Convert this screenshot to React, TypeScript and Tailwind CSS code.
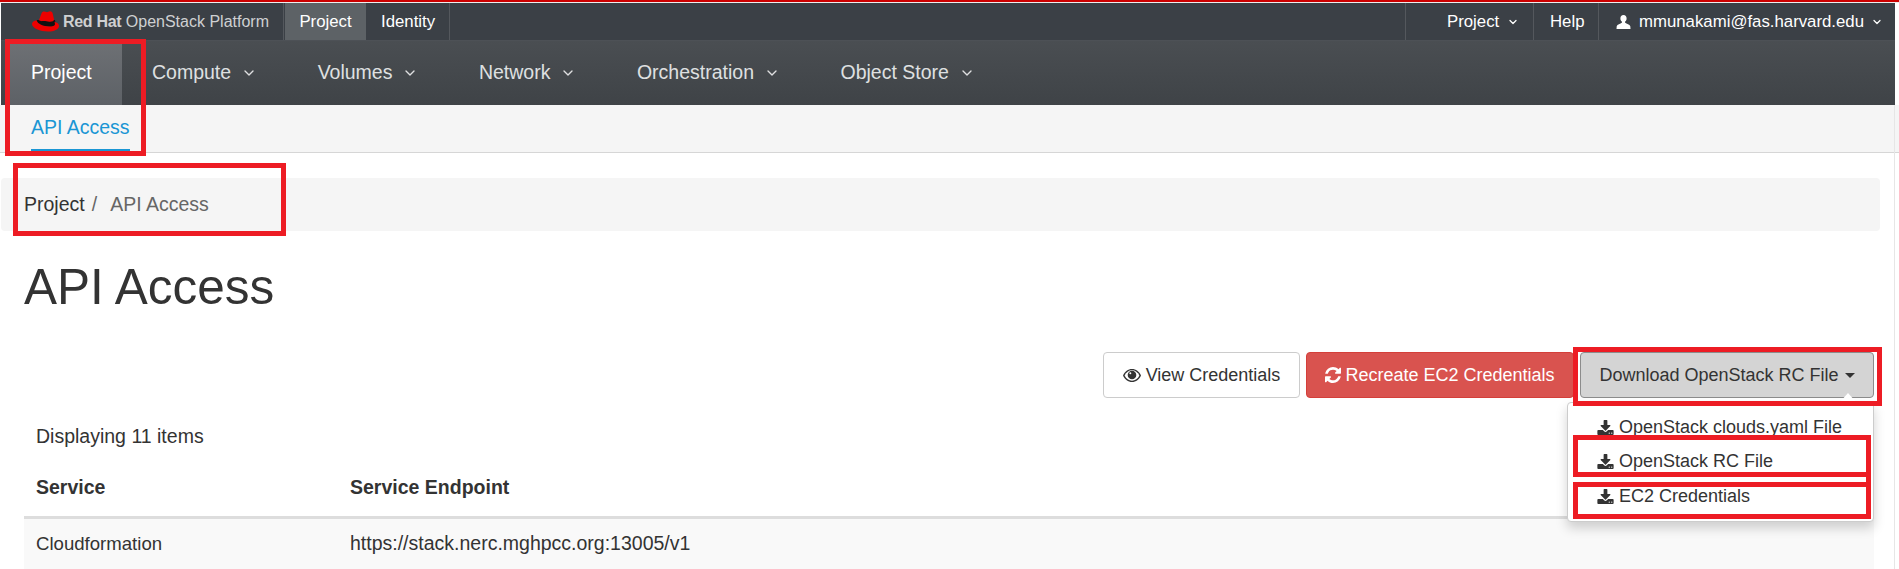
import { ChevronDown } from "lucide-react";
import type { ReactNode } from "react";

function User() {
  return (
    <svg viewBox="0 0 14 14" className="w-[15px] h-[14px] fill-white shrink-0">
      <path d="M7 0C5 0 3.9 1.5 3.9 3.400c0 1.300.5 2.500 1.400 3.200.3.3.3.9 0 1.200C4 8.900.7 9.500.2 11.200L0 14h14l-.2-2.800c-.5-1.700-3.800-2.300-5.100-3.400-.3-.3-.3-.9 0-1.200.9-.7 1.400-1.900 1.400-3.200C10.100 1.500 9 0 7 0z" />
    </svg>
  );
}

function RedHat() {
  return (
    <svg viewBox="0 0 27 21" className="w-[27px] h-[21px] shrink-0">
      <path fill="#111" d="M4 9 L23 9 L24 16 L8 15z" />
      <path fill="#e00" d="M7 9 L9.500 2.500 C10 1 11 .5 12 .5 C13 .5 14 1.200 15 1.200 C16 1.200 16.500 .3 18 .3 C19.500 .3 20.500 1.200 20.800 3 L22 8.500 C22 10.500 19 11 16 10.500 C12 10 7.500 10.500 7 9z" />
      <path fill="#e00" d="M4.800 9.200 C2 9.800 0 11 0 13 C0 17 8 20.500 16 20.500 C22 20.500 27 18.500 27 15 C27 13 25 11.500 22.500 10.800 L23 13 C23 15 20 15.500 17 15.500 C12 15.500 5 12.500 5 10z" />
    </svg>
  );
}

function Eye() {
  return (
    <svg viewBox="0 0 18 13" className="w-[18px] h-[13px] shrink-0">
      <path fill="#333" d="M9 0C5 0 1.800 2.500 0 6.500 1.800 10.500 5 13 9 13s7.200-2.500 9-6.500C16.200 2.500 13 0 9 0z" />
      <path fill="#fff" d="M9 1.300C5.800 1.300 3.200 3.300 1.600 6.500 3.200 9.700 5.800 11.700 9 11.700s5.800-2 7.400-5.200C14.800 3.300 12.200 1.300 9 1.300z" />
      <circle fill="#333" cx="9" cy="6" r="4.300" />
      <circle fill="#fff" cx="7.300" cy="4.300" r="1" />
    </svg>
  );
}

function Refresh() {
  return (
    <svg viewBox="0 0 1536 1536" className="w-[16px] h-[16px] fill-white shrink-0">
      <path d="M1511 928q0 5-1 7-64 268-268 434.500T764 1536q-146 0-282.500-55T238 1324l-129 129q-19 19-45 19t-45-19-19-45V960q0-26 19-45t45-19h448q26 0 45 19t19 45-19 45l-137 137q71 66 161 102t187 36q134 0 250-65t186-179q11-17 53-117 8-23 30-23h192q13 0 22.500 9.500t9.500 22.500zm25-800v448q0 26-19 45t-45 19h-448q-26 0-45-19t-19-45 19-45l138-138Q969 256 768 256q-134 0-250 65T332 500q-11 17-53 117-8 23-30 23H50q-13 0-22.500-9.500T18 608v-7q65-268 270-434.500T768 0q146 0 284 55.500T1297 212l130-129q19-19 45-19t45 19 19 45z" />
    </svg>
  );
}

function Download() {
  return (
    <svg viewBox="0 0 1664 1536" className="w-[17px] h-[15px] fill-[#333] shrink-0">
      <path d="M1280 1216q0-26-19-45t-45-19-45 19-19 45 19 45 45 19 45-19 19-45zm256 0q0-26-19-45t-45-19-45 19-19 45 19 45 45 19 45-19 19-45zm128-224v320q0 40-28 68t-68 28H96q-40 0-68-28t-28-68V992q0-40 28-68t68-28h465l135 136q58 56 136 56t136-56l136-136h464q40 0 68 28t28 68zM1339 423q17 41-14 70L877 941q-18 19-45 19t-45-19L339 493q-31-29-14-70 17-39 59-39h256V-64q0-26 19-45t45-19h256q26 0 45 19t19 45v448h256q42 0 59 39z" transform="translate(0 128)" />
    </svg>
  );
}

function TopLink({ children, active }: { children: ReactNode; active?: boolean }) {
  return (
    <a className={`h-[37px] flex items-center text-white text-[16.800px] whitespace-nowrap ${active ? "bg-[#5d6266] w-[81px] justify-center" : ""}`}>
      {children}
    </a>
  );
}

function NavItem({ label }: { label: string }) {
  return (
    <a className="flex items-center gap-[10px] text-[#dfe0e1] text-[19.500px]">
      {label}
      <ChevronDown className="w-[16px] h-[16px]" strokeWidth={2} />
    </a>
  );
}

function Mark({ className }: { className: string }) {
  return <div className={`absolute border-[5px] border-[#ed1c24] pointer-events-none ${className}`} />;
}

export default function App() {
  return (
    <div className="relative h-[569px] overflow-hidden bg-white text-[#333] font-['Liberation_Sans',Arial,sans-serif] text-[18px]">
      <div className="h-[3px] bg-[#c00] border-b border-[#eee]" />
      <div className="mr-[4px] ml-[1px]">
        {/* barra superior */}
        <div className="h-[38px] bg-[#3b4046] flex items-center border-b border-[#4d5156]">
          <div className="w-[283px] h-[37px] pl-[31px] flex items-center gap-[4px] border-r border-[#54585d]">
            <RedHat />
            <span className="text-[#cfd0d2] text-[16px] whitespace-nowrap">
              <b className="font-bold tracking-[-0.300px]">Red Hat</b> OpenStack Platform
            </span>
          </div>
          <div className="ml-[1px] flex w-[165px] border-r border-[#54585d]">
            <TopLink active>Project</TopLink>
            <span className="pl-[15px]"><TopLink>Identity</TopLink></span>
          </div>
          <div className="ml-auto flex items-center h-[37px]">
            <div className="w-[128px] h-full pl-[41px] flex items-center gap-[8px] border-l border-[#54585d]">
              <TopLink>Project</TopLink>
              <ChevronDown className="w-[12px] h-[12px] text-white" strokeWidth={2.500} />
            </div>
            <div className="w-[65px] h-full pl-[16px] flex items-center border-l border-[#54585d]">
              <TopLink>Help</TopLink>
            </div>
            <div className="w-[297px] h-full pl-[17px] flex items-center border-l border-[#54585d]">
              <User />
              <span className="ml-[8px]"><TopLink>mmunakami@fas.harvard.edu</TopLink></span>
              <ChevronDown className="ml-[7px] w-[12px] h-[12px] text-white" strokeWidth={2.500} />
            </div>
          </div>
        </div>

        {/* navegação */}
        <div className="h-[64px] bg-gradient-to-b from-[#4a4e52] to-[#3f4347] flex items-end pl-[8px]">
          <a className="h-[61px] w-[113px] pl-[22px] pb-[3px] flex items-center text-white text-[19.500px] bg-gradient-to-b from-[#6d7074] to-[#5d6166]">
            Project
          </a>
          <div className="h-[61px] flex items-center pl-[30px] pb-[3px] gap-[60.500px]">
            <NavItem label="Compute" />
            <NavItem label="Volumes" />
            <NavItem label="Network" />
            <NavItem label="Orchestration" />
            <NavItem label="Object Store" />
          </div>
        </div>
      </div>

      <div className="h-[48px] bg-[#f5f5f5] border-b border-[#d6d6d6] pl-[31px] flex">
        <a className="h-[46px] pt-[2px] text-[#1a96d4] text-[19.500px] flex items-center border-b-2 border-[#1a96d4]">API Access</a>
      </div>

      {/* breadcrumb */}
      <div className="mt-[25px] ml-[1px] mr-[19px] h-[53px] rounded-[4px] bg-[#f5f5f5] flex items-center pl-[23px] text-[19.500px]">
        <span>Project</span>
        <span className="ml-[7px] text-[#666]">/</span>
        <span className="ml-[13px] text-[#666]">API Access</span>
      </div>

      <div className="pl-[24px] pr-[25px]">
        <h1 className="mt-[26px] text-[49.500px] leading-[60px] font-normal">API Access</h1>

        {/* ações */}
        <div className="mt-[35px] flex justify-end gap-[6px]">
          <button className="h-[46px] w-[197px] border border-[#ccc] rounded-[4px] bg-white flex items-center justify-center gap-[5px]">
            <Eye />View Credentials
          </button>
          <button className="h-[46px] w-[268px] rounded-[4px] bg-[#d9534f] border border-[#d43f3a] text-white flex items-center justify-center gap-[4px]">
            <Refresh />Recreate EC2 Credentials
          </button>
          <button className="h-[46px] w-[294px] rounded-[4px] bg-[#d4d4d4] border border-[#8c8c8c] flex items-center justify-center gap-[6px]">
            Download OpenStack RC File
            <span className="border-x-[5px] border-x-transparent border-t-[5px] border-t-[#333]" />
          </button>
        </div>

        <div className="mt-[27px] pl-[12px] leading-[22px] text-[19.500px]">Displaying 11 items</div>

        <table className="mt-[13px] w-full border-collapse text-[18.600px]">
          <thead>
            <tr className="h-[57px] border-b-[3px] border-[#ddd] text-left text-[19.500px]">
              <th className="w-[326px] pl-[12px] font-bold">Service</th>
              <th className="font-bold">Service Endpoint</th>
            </tr>
          </thead>
          <tbody>
            <tr className="h-[52px] bg-[#f9f9f9]">
              <td className="pl-[12px]">Cloudformation</td>
              <td className="text-[19.500px]">https://stack.nerc.mghpcc.org:13005/v1</td>
            </tr>
          </tbody>
        </table>
      </div>

      {/* menu aberto */}
      <div className="absolute left-[1567px] top-[402px] w-[307px] h-[120px] bg-white border border-[#ccc] rounded-[4px] shadow-[0_6px_12px_rgba(0,0,0,0.175)] pl-[29px] pt-[7px]">
        {["OpenStack clouds.yaml File", "OpenStack RC File", "EC2 Credentials"].map((t) => (
          <a key={t} className="h-[34.500px] flex items-center gap-[5px] text-[18px]">
            <Download />{t}
          </a>
        ))}
      </div>
      <div className="absolute left-[1840px] top-[393px] border-x-[8px] border-x-transparent border-b-[9px] border-b-white" />

      {/* marcações em vermelho */}
      <Mark className="left-[5px] top-[39px] w-[141px] h-[117px]" />
      <Mark className="left-[13px] top-[163px] w-[273px] h-[73px]" />
      <Mark className="left-[1573px] top-[347px] w-[309px] h-[59px]" />
      <Mark className="left-[1573px] top-[435px] w-[298px] h-[42px]" />
      <Mark className="left-[1573px] top-[482px] w-[298px] h-[37px]" />
      <div className="absolute left-[1866px] top-[477px] w-[5px] h-[5px] bg-[#ed1c24]" />

      {/* borda da janela */}
      <div className="absolute right-[4px] top-[105px] bottom-0 w-px bg-[#e6e6e6]" />
    </div>
  );
}
